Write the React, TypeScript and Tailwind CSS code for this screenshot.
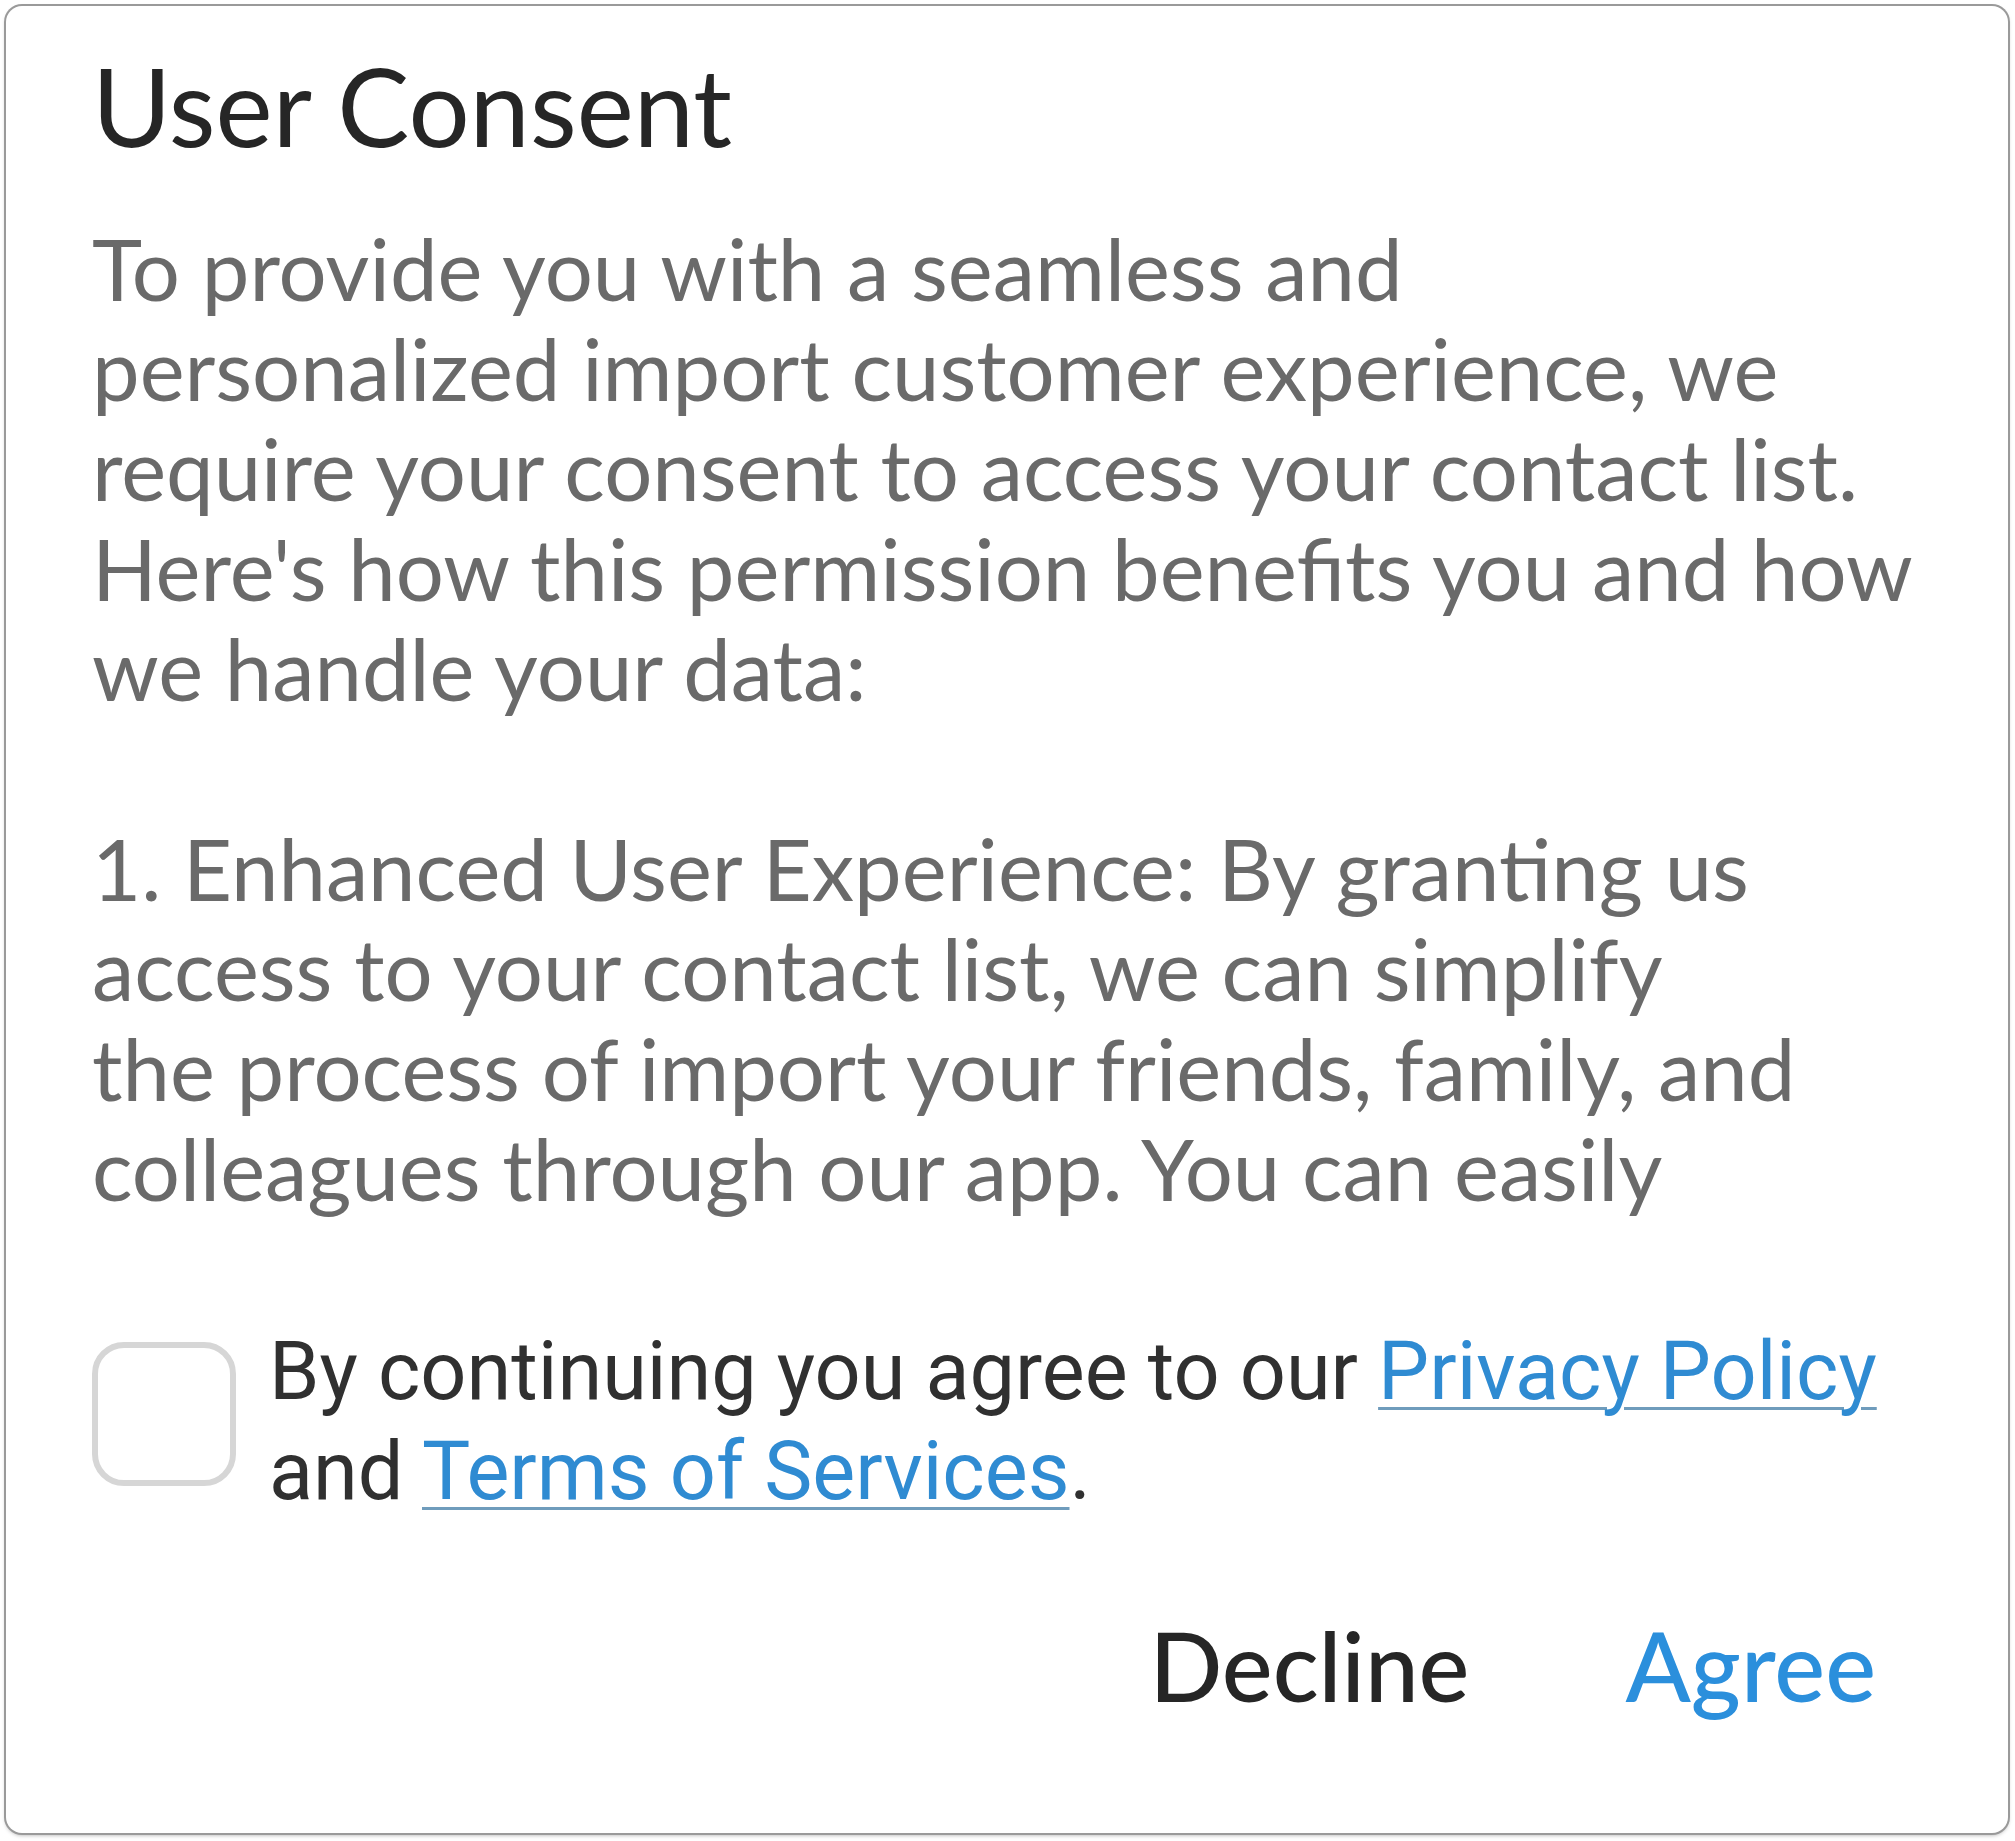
import React from "react";

const introLines = [
  "To provide you with a seamless and",
  "personalized import customer experience, we",
  "require your consent to access your contact list.",
  "Here's how this permission benefits you and how",
  "we handle your data:",
];

const pointLines = [
  "1. Enhanced User Experience: By granting us",
  "access to your contact list, we can simplify",
  "the process of import your friends, family, and",
  "colleagues through our app. You can easily",
];

export default function App() {
  return (
    <div className="min-h-screen w-full bg-white p-[6px] font-['Lato',sans-serif]">
      {/* Consent dialog */}
      <div className="flex h-[1827px] w-[2002px] flex-col rounded-[16px] bg-white pl-[86px] pr-[60px] shadow-[0_0_0_2px_#9a9a9a,0_2px_4px_rgba(0,0,0,0.35)]">
        <h1 className="mt-[34px] text-[108px] leading-[130px] text-[#262626]">User Consent</h1>

        {/* Scrollable body */}
        <div className="mt-[48px] h-[1000px] overflow-hidden text-[85px] leading-[100px] text-[#6a6a6a]">
          {introLines.map((line) => (
            <div key={line}>{line}</div>
          ))}
          <div className="h-[100px]" />
          {pointLines.map((line) => (
            <div key={line}>{line}</div>
          ))}
        </div>

        {/* Agreement row */}
        <div className="mt-[104px] flex items-start gap-[33px]">
          <div className="mt-[20px] h-[144px] w-[144px] shrink-0 rounded-[32px] border-[6px] border-[#d6d6d6]" />
          <p className="font-['Roboto',sans-serif] text-[81px] leading-[100px] text-[#303030]">
            By continuing you agree to our{" "}
            <a href="#" className="text-[#2f8bd2] underline decoration-[#6f9cbc] decoration-[3px] underline-offset-[8px]">
              Privacy Policy
            </a>
            <br />
            and{" "}
            <a href="#" className="text-[#2f8bd2] underline decoration-[#6f9cbc] decoration-[3px] underline-offset-[8px]">
              Terms of Services
            </a>
            .
          </p>
        </div>

        {/* Actions */}
        <div className="mt-[88px] flex justify-end gap-[156px] pr-[72px] text-[96px] leading-[110px] font-medium">
          <button className="text-[#262626]">Decline</button>
          <button className="text-[#2b8fdc]">Agree</button>
        </div>
      </div>
    </div>
  );
}
